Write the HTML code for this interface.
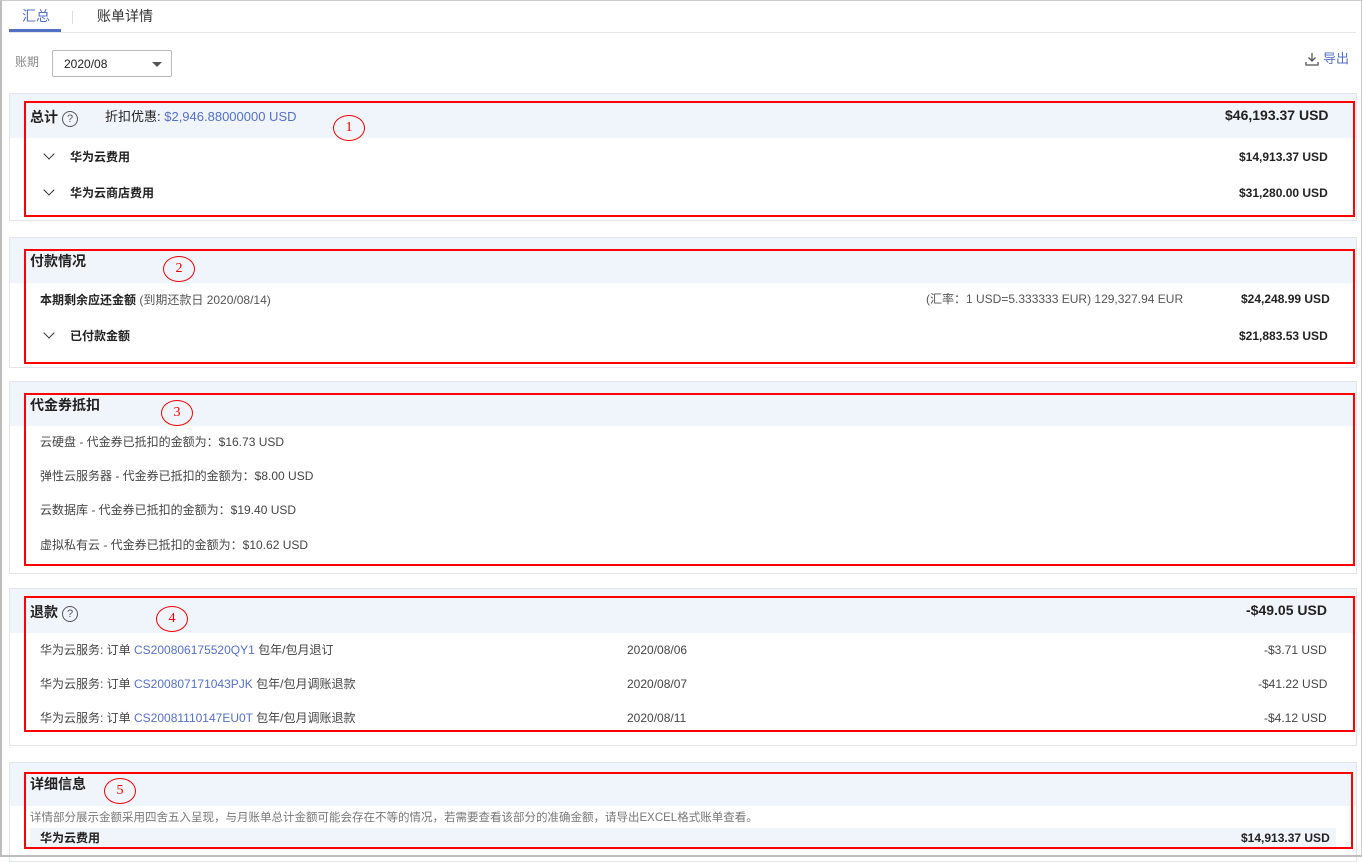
<!DOCTYPE html><html><head><meta charset="utf-8"><style>
*{margin:0;padding:0;box-sizing:border-box}
body{width:1362px;height:857px;overflow:hidden;background:#fff;font-family:"Liberation Sans","Noto Sans CJK SC",sans-serif;font-size:12px;color:#333;position:relative}
.frame{position:absolute;left:0;top:0;width:1362px;height:857px;border:2px solid #bdbdbd;border-top:1px solid #ccc;border-right:1px solid #ccc}
.a{position:absolute;white-space:nowrap;line-height:16px}
.panel{position:absolute;left:9px;width:1348px;border:1px solid #e2e4e8;background:#fff}
.hd{position:absolute;left:0;right:0;top:0;background:#f0f4fb}
.red{position:absolute;left:24px;border:2px solid #f00}
.circ{position:absolute;width:32px;height:26px;border:1.5px solid #e00;border-radius:50%;color:#e00;font-size:14px;text-align:center;line-height:23px;font-family:"Liberation Serif",serif}
.h{font-size:14px;font-weight:bold;color:#222;line-height:18px}
.b{font-weight:bold;color:#222}
.blue{color:#5470c6}
.chev{position:absolute;width:8px;height:8px;border-right:1.5px solid #333;border-bottom:1.5px solid #333;transform:rotate(45deg)}
.q{display:inline-block;width:16px;height:16px;border:1.3px solid #555;border-radius:50%;font-size:11px;line-height:14px;text-align:center;font-weight:normal;color:#555;vertical-align:0;margin-left:4px}
</style></head><body>
<div class="a" style="left:22px;top:8px;font-size:14px;color:#5470c6">汇总</div>
<div style="position:absolute;left:9px;top:29px;width:52px;height:3px;background:#5470c6"></div>
<div style="position:absolute;left:72px;top:11px;width:1px;height:13px;background:#ddd"></div>
<div class="a" style="left:97px;top:8px;font-size:14px;color:#333">账单详情</div>
<div style="position:absolute;left:9px;top:32px;width:1347px;height:1px;background:#e2e4e8"></div>
<div class="a" style="left:15px;top:54px;color:#888">账期</div>
<div style="position:absolute;left:52px;top:50px;width:120px;height:27px;border:1px solid #bbb;border-radius:2px"></div>
<div class="a" style="left:64px;top:56px;color:#222">2020/08</div>
<div style="position:absolute;left:152px;top:62px;border-left:5px solid transparent;border-right:5px solid transparent;border-top:5px solid #555"></div>
<svg style="position:absolute;left:1305px;top:52px" width="14" height="14" viewBox="0 0 14 14" fill="none" stroke="#555" stroke-width="1.3"><path d="M7 1v8M3.5 5.5L7 9l3.5-3.5M1 10v3h12v-3"/></svg>
<div class="a" style="left:1323px;top:51px;font-size:13px;color:#5470c6">导出</div>

<div class="panel" style="top:93px;height:128px"><div class="hd" style="height:44px"></div></div>
<div class="a h" style="left:30px;top:108px">总计<span class="q">?</span></div>
<div class="a" style="left:105px;top:109px;font-size:13px;color:#222">折扣优惠: <span class="blue">$2,946.88000000 USD</span></div>
<div class="a h" style="left:1225px;top:106px">$46,193.37 USD</div>
<div class="chev" style="left:45px;top:150px"></div>
<div class="a b" style="left:70px;top:149px">华为云费用</div>
<div class="a b" style="left:1239px;top:149px">$14,913.37 USD</div>
<div class="chev" style="left:45px;top:186px"></div>
<div class="a b" style="left:70px;top:185px">华为云商店费用</div>
<div class="a b" style="left:1239px;top:185px">$31,280.00 USD</div>
<div class="red" style="top:101px;width:1331px;height:116px"></div>
<div class="circ" style="left:333px;top:115px">1</div>

<div class="panel" style="top:237px;height:131px"><div class="hd" style="height:45px"></div></div>
<div class="a h" style="left:30px;top:252px">付款情况</div>
<div class="a" style="left:40px;top:292px"><span class="b">本期剩余应还金额</span> <span style="color:#555">(到期还款日 2020/08/14)</span></div>
<div class="a" style="left:926px;top:291px;color:#555">(汇率：1 USD=5.333333 EUR) 129,327.94 EUR</div>
<div class="a b" style="left:1241px;top:291px">$24,248.99 USD</div>
<div class="chev" style="left:45px;top:329px"></div>
<div class="a b" style="left:70px;top:328px">已付款金额</div>
<div class="a b" style="left:1239px;top:328px">$21,883.53 USD</div>
<div class="red" style="top:249px;width:1331px;height:115px"></div>
<div class="circ" style="left:163px;top:256px">2</div>

<div class="panel" style="top:381px;height:193px"><div class="hd" style="height:44px"></div></div>
<div class="a h" style="left:30px;top:396px">代金券抵扣</div>
<div class="a" style="left:40px;top:434px;color:#444">云硬盘 - 代金券已抵扣的金额为：$16.73 USD</div>
<div class="a" style="left:40px;top:468px;color:#444">弹性云服务器 - 代金券已抵扣的金额为：$8.00 USD</div>
<div class="a" style="left:40px;top:502px;color:#444">云数据库 - 代金券已抵扣的金额为：$19.40 USD</div>
<div class="a" style="left:40px;top:537px;color:#444">虚拟私有云 - 代金券已抵扣的金额为：$10.62 USD</div>
<div class="red" style="top:393px;width:1331px;height:173px"></div>
<div class="circ" style="left:161px;top:400px">3</div>

<div class="panel" style="top:588px;height:158px"><div class="hd" style="height:44px"></div></div>
<div class="a h" style="left:30px;top:603px">退款<span class="q">?</span></div>
<div class="a h" style="left:1246px;top:601px">-$49.05 USD</div>
<div class="a" style="left:40px;top:642px;color:#444">华为云服务: 订单 <span class="blue">CS200806175520QY1</span> 包年/包月退订</div>
<div class="a" style="left:627px;top:642px;color:#444">2020/08/06</div>
<div class="a" style="left:1264px;top:642px;color:#444">-$3.71 USD</div>
<div class="a" style="left:40px;top:676px;color:#444">华为云服务: 订单 <span class="blue">CS200807171043PJK</span> 包年/包月调账退款</div>
<div class="a" style="left:627px;top:676px;color:#444">2020/08/07</div>
<div class="a" style="left:1258px;top:676px;color:#444">-$41.22 USD</div>
<div class="a" style="left:40px;top:710px;color:#444">华为云服务: 订单 <span class="blue">CS20081110147EU0T</span> 包年/包月调账退款</div>
<div class="a" style="left:627px;top:710px;color:#444">2020/08/11</div>
<div class="a" style="left:1264px;top:710px;color:#444">-$4.12 USD</div>
<div class="red" style="top:596px;width:1331px;height:136px"></div>
<div class="circ" style="left:156px;top:606px">4</div>

<div class="panel" style="top:762px;height:100px"><div class="hd" style="height:43px"></div></div>
<div class="a h" style="left:30px;top:775px">详细信息</div>
<div class="a" style="left:30px;top:810px;font-size:11.5px;color:#777">详情部分展示金额采用四舍五入呈现，与月账单总计金额可能会存在不等的情况，若需要查看该部分的准确金额，请导出EXCEL格式账单查看。</div>
<div style="position:absolute;left:30px;top:828px;width:1306px;height:22px;background:#f0f4fb"></div>
<div class="a b" style="left:40px;top:830px">华为云费用</div>
<div class="a b" style="left:1241px;top:830px">$14,913.37 USD</div>
<div class="red" style="top:772px;width:1329px;height:77px"></div>
<div class="circ" style="left:104px;top:778px">5</div>
<div class="frame"></div>
</body></html>
